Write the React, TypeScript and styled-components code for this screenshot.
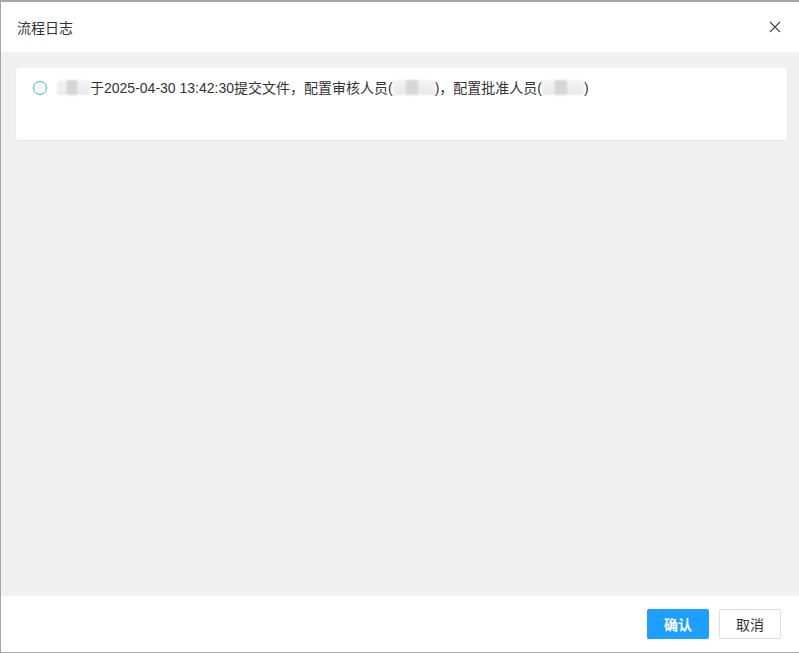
import React from 'react';
import styled, { createGlobalStyle } from 'styled-components';

const GlobalStyle = createGlobalStyle`
  html, body {
    margin: 0;
    padding: 0;
    background: #fff;
  }
  body {
    font-family: "Liberation Sans", "Noto Sans CJK SC", sans-serif;
    color: #333;
  }
`;

// Окно диалога
const Dialog = styled.div`
  box-sizing: border-box;
  width: 799px;
  height: 653px;
  display: flex;
  flex-direction: column;
  border-top: 2px solid #a6a6a6;
  border-left: 1px solid #a6a6a6;
  border-bottom: 1px solid #a6a6a6;
  background: #fff;
`;

const Header = styled.div`
  height: 50px;
  display: flex;
  align-items: center;
  justify-content: space-between;
  padding: 0 14px 0 16px;
  flex-shrink: 0;
`;

const Title = styled.div`
  font-size: 14px;
  color: #333;
`;

const CloseButton = styled.button`
  width: 20px;
  height: 20px;
  padding: 0;
  border: none;
  background: none;
  display: flex;
  align-items: center;
  justify-content: center;
  cursor: pointer;
`;

const Body = styled.div`
  flex: 1;
  background: #f0f0f0;
  padding: 16px 12px 0 15px;
`;

const Card = styled.div`
  height: 72px;
  box-sizing: border-box;
  background: #fff;
  border-radius: 3px;
  box-shadow: 0 1px 2px rgba(0, 0, 0, 0.05);
  padding: 12px 17px;
`;

const LogRow = styled.div`
  display: flex;
  align-items: center;
  gap: 10px;
  font-size: 14px;
  line-height: 16px;
  color: #333;
`;

const Dot = styled.span`
  width: 12px;
  height: 12px;
  border-radius: 50%;
  border: 1.5px solid #2ec58b;
  flex-shrink: 0;
`;

const Mosaic = styled.span<{ w: number }>`
  display: inline-block;
  width: ${p => p.w}px;
  height: 15px;
  vertical-align: -2px;
  background:
    linear-gradient(90deg, transparent 30%, #cfcfcf 30%, #cfcfcf 60%, transparent 60%),
    linear-gradient(#f2f2f2, #e6e6e6);
  filter: blur(1.2px);
  opacity: 0.85;
`;

const Footer = styled.div`
  height: 56px;
  display: flex;
  align-items: center;
  justify-content: flex-end;
  gap: 10px;
  padding-right: 18px;
  flex-shrink: 0;
`;

const Button = styled.button<{ primary?: boolean }>`
  width: 62px;
  height: 30px;
  box-sizing: border-box;
  border-radius: 2px;
  font-size: 14px;
  font-family: inherit;
  font-weight: ${p => (p.primary ? 600 : 400)};
  cursor: pointer;
  background: ${p => (p.primary ? '#1e9fff' : '#fff')};
  color: ${p => (p.primary ? '#fff' : '#333')};
  border: 1px solid ${p => (p.primary ? '#1e9fff' : '#dedede')};
`;

const App: React.FC = () => {
  return (
    <>
      <GlobalStyle />
      <Dialog>
        <Header>
          <Title>流程日志</Title>
          <CloseButton>
            <svg width="12" height="12" viewBox="0 0 12 12">
              <path d="M1 1 L11 11 M11 1 L1 11" stroke="#444" strokeWidth="1.1" />
            </svg>
          </CloseButton>
        </Header>
        <Body>
          <Card>
            <LogRow>
              <Dot />
              <span>
                <Mosaic w={33} />于2025-04-30 13:42:30提交文件，配置审核人员(<Mosaic w={42} />)，配置批准人员(<Mosaic w={42} />)
              </span>
            </LogRow>
          </Card>
        </Body>
        <Footer>
          <Button primary>确认</Button>
          <Button>取消</Button>
        </Footer>
      </Dialog>
    </>
  );
};

export default App;
